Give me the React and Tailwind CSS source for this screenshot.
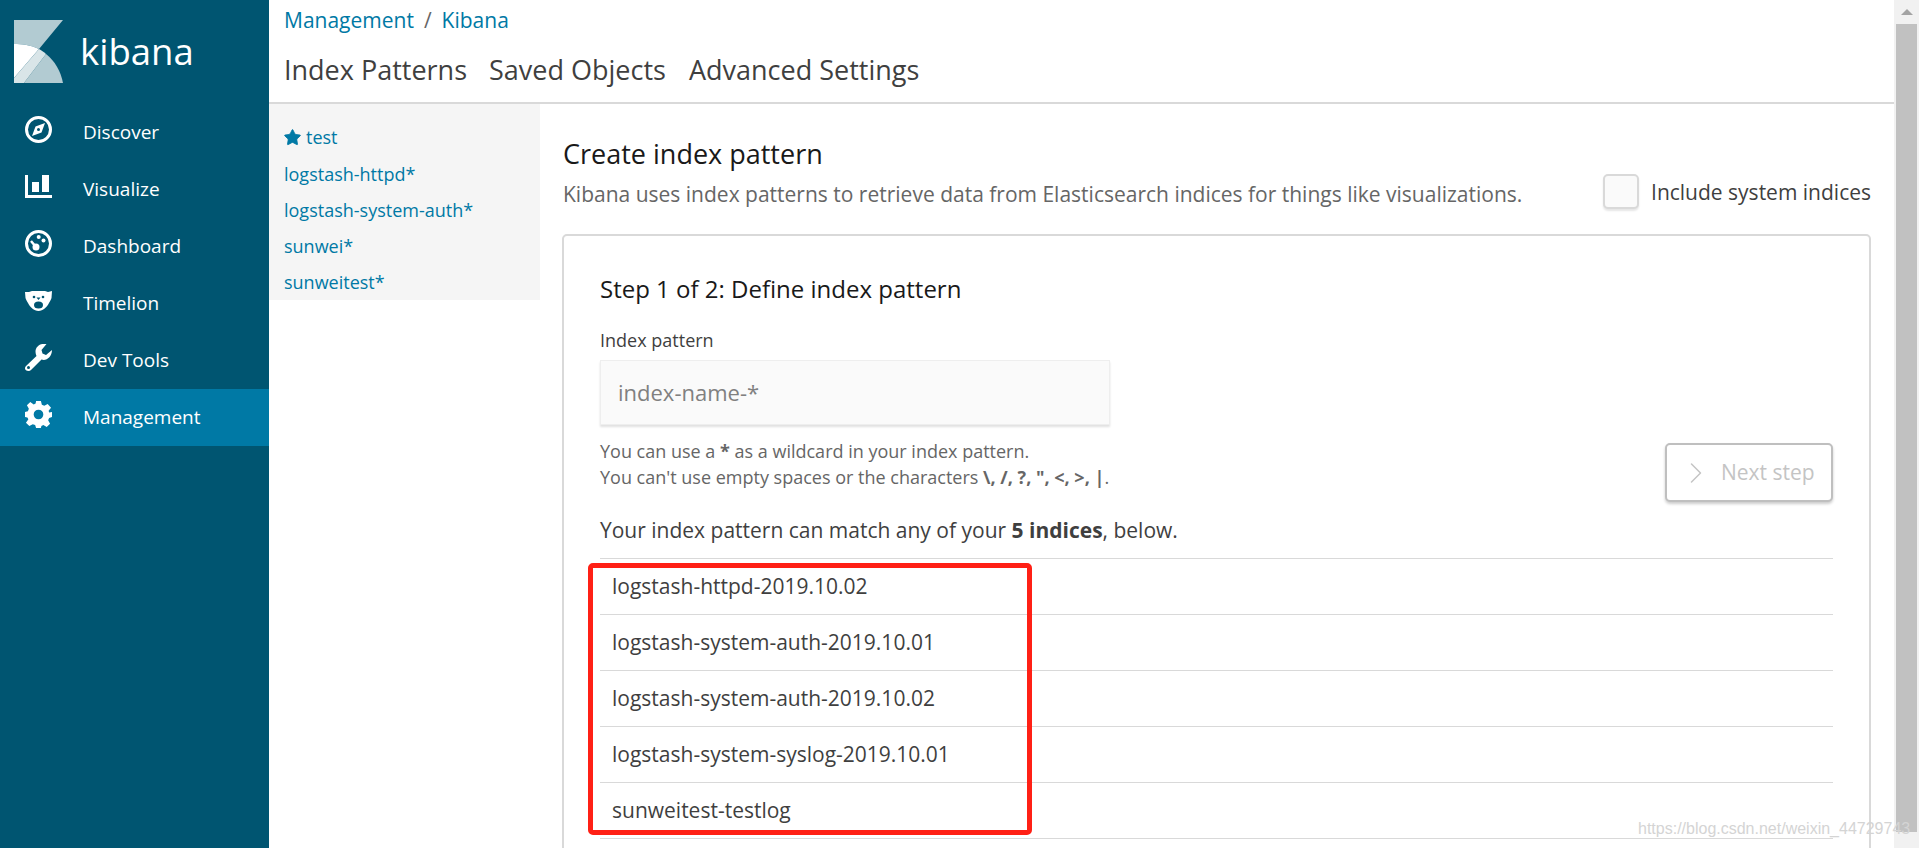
import React from "react";
import { Star, ChevronRight } from "lucide-react";

const navItems = [
  { label: "Discover", icon: <CompassIcon /> },
  { label: "Visualize", icon: <BarsIcon /> },
  { label: "Dashboard", icon: <GaugeIcon /> },
  { label: "Timelion", icon: <BearIcon /> },
  { label: "Dev Tools", icon: <WrenchIcon /> },
  { label: "Management", icon: <GearIcon />, active: true },
];

const patterns = ["logstash-httpd*", "logstash-system-auth*", "sunwei*", "sunweitest*"];

const indices = [
  "logstash-httpd-2019.10.02",
  "logstash-system-auth-2019.10.01",
  "logstash-system-auth-2019.10.02",
  "logstash-system-syslog-2019.10.01",
  "sunweitest-testlog",
];

function KibanaLogo() {
  return (
    <svg width="49" height="63" viewBox="0 0 49 63">
      <path d="M0 0H49L25 29C17 25 8 24 0 24Z" fill="#b2cbd2" />
      <path d="M32 34C41 41 47 52 49 63H10Z" fill="#b2cbd2" />
      <path d="M0 24C8 24 17 25 25 29L0 58Z" fill="#ffffff" />
      <path d="M25 29C27 30 30 32 32 34L10 63H0V58Z" fill="#d9e5e8" />
    </svg>
  );
}

function CompassIcon() {
  return (
    <svg width="27" height="27" viewBox="0 0 27 27">
      <circle cx="13.5" cy="13.5" r="12" fill="none" stroke="#fff" strokeWidth="3" />
      <path
        fillRule="evenodd"
        fill="#fff"
        d="M20 7 16.500 16.500 7 20 10.500 10.500ZM13.500 12A1.500 1.500 0 1 0 13.500 15 1.500 1.500 0 1 0 13.500 12Z"
      />
    </svg>
  );
}

function BarsIcon() {
  return (
    <svg width="27" height="23" viewBox="0 0 27 23">
      <path d="M0 0H3V20H27V23H0Z" fill="#fff" />
      <path d="M7 7H14V17H7ZM17 0H24V17H17Z" fill="#fff" />
    </svg>
  );
}

function GaugeIcon() {
  return (
    <svg width="27" height="27" viewBox="0 0 27 27">
      <circle cx="13.5" cy="13.5" r="12" fill="none" stroke="#fff" strokeWidth="3" />
      <circle cx="11" cy="17" r="3.500" fill="#fff" />
      <path d="M6 11 11 17" stroke="#fff" strokeWidth="2.500" />
      <circle cx="13.700" cy="7" r="2" fill="#fff" />
      <circle cx="18.500" cy="10.500" r="2" fill="#fff" />
    </svg>
  );
}

function BearIcon() {
  return (
    <svg width="27" height="21" viewBox="0 0 27 21">
      <path d="M0 2 4 2 7 1H20L23 2 27 1 26.500 8C26 10 25 11 24 13 22 17 18 21 13.500 21 9 21 5 17 3 13 2 11 1 10 .5 8Z" fill="#fff" />
      <circle cx="9" cy="7" r="1.300" fill="#005571" />
      <circle cx="18" cy="7" r="1.300" fill="#005571" />
      <path d="M11.500 7.500H15.500L13.500 10Z" fill="#005571" />
      <ellipse cx="13.500" cy="15" rx="4.500" ry="3.500" fill="#005571" />
    </svg>
  );
}

function WrenchIcon() {
  return (
    <svg width="27" height="27" viewBox="0 0 27 27">
      <path d="M27 6 21 11 17.500 9.500 16.500 6 21.500 0C16-1 11 2 10.500 7 10.500 9 11 11 11.500 12L1 22C-1 24 0 27 3.500 27 4.500 27 5.500 26.500 6.500 25.500L16.500 15.500C21 17.500 27 13 27 6Z" fill="#fff" />
      <circle cx="3.500" cy="23.500" r="1.500" fill="#005571" />
    </svg>
  );
}

function GearIcon() {
  return (
    <svg width="27" height="27" viewBox="0 0 28 28">
      <path
        fillRule="evenodd"
        fill="#fff"
        d="M11.500 0H16.500L17.500 4 20 5 23.500 3 27 7 24.500 10 25 12 28 11.500V16.500L25 17.500 24 20 26 23.500 22.500 27 19 25 17 26 16.500 28H11.500L10.500 25 8 24 4.500 26 1 22.500 3.500 19 2.500 17 0 16.500V11.500L3 10.500 4 8 2 4.500 5.500 1 9 3.500 11 2.500ZM14 9A5 5 0 1 0 14 19 5 5 0 1 0 14 9Z"
      />
    </svg>
  );
}

export default function App() {
  return (
    <div className="relative flex h-screen overflow-hidden bg-white font-['Open_Sans',sans-serif]">
      <aside className="w-[269px] shrink-0 bg-[#005571] text-white">
        <div className="flex h-[104px] items-start pl-[14px] pt-[20px]">
          <KibanaLogo />
          <span className="ml-[17px] mt-[9px] text-[36.5px] leading-[44px] font-medium">kibana</span>
        </div>
        <nav>
          {navItems.map((item) => (
            <div
              key={item.label}
              className={`flex h-[57px] items-center pl-[25px] text-[19px] ${item.active ? "bg-[#0079a5]" : ""}`}
            >
              <span className="-mt-[6px] flex w-[27px] justify-center">{item.icon}</span>
              <span className="ml-[31px]">{item.label}</span>
            </div>
          ))}
        </nav>
      </aside>

      <main className="min-w-0 flex-1">
        <header className="h-[104px] border-b-2 border-[#d9d9d9] pl-[15px]">
          <div className="flex gap-[10px] pt-[6px] text-[21px] leading-[28px] text-[#0079a5]">
            <span>Management</span>
            <span className="text-[#666666]">/</span>
            <span>Kibana</span>
          </div>
          <div className="mt-[18px] flex gap-[23px] text-[27px] leading-[36px] text-[#3f3f3f]">
            <span className="-mr-[1px]">Index Patterns</span>
            <span>Saved Objects</span>
            <span>Advanced Settings</span>
          </div>
        </header>

        <div className="flex">
          <div className="h-[196px] w-[271px] shrink-0 bg-[#f5f5f5] pl-[15px] pt-[16px] text-[18px] leading-[36px] text-[#0079a5]">
            <div className="-ml-[1px] -mt-[1px] mb-[1px] flex items-center gap-[4px]">
              <Star size={19} fill="#0079a5" strokeWidth={1} />
              test
            </div>
            {patterns.map((p) => (
              <div key={p}>{p}</div>
            ))}
          </div>

          <div className="min-w-0 flex-1 pl-[23px] pr-[23px]">
            <div className="flex h-[130px] items-start justify-between pt-[32px]">
              <div>
                <h1 className="text-[27px] leading-[36px] text-[#191919]">Create index pattern</h1>
                <p className="mt-[6px] text-[21px] leading-[32px] text-[#666666]">
                  Kibana uses index patterns to retrieve data from Elasticsearch indices for things like visualizations.
                </p>
              </div>
              <label className="mt-[38px] flex items-center gap-[12px] text-[21px] text-[#3f3f3f]">
                <span className="h-[35px] w-[36px] rounded-[5px] border-2 border-[#d9d9d9] bg-[#fafafa] shadow-[0_2px_2px_rgba(0,0,0,0.1)]" />
                <span className="mt-[2px]">Include system indices</span>
              </label>
            </div>

            <section className="-ml-[1px] rounded-t-[5px] border-2 border-[#d9d9d9] px-[36px] pb-[24px] pt-[35px]">
              <h2 className="text-[24px] leading-[36px] text-[#191919]">Step 1 of 2: Define index pattern</h2>
              <div className="flex items-start justify-between">
                <div>
                  <div className="mt-[20px] text-[18px] leading-[26px] text-[#3f3f3f]">Index pattern</div>
                  <div className="mt-[7px] flex h-[65px] w-[510px] items-center border border-[#eeeeee] bg-[#fafafa] pl-[17px] text-[22px] text-[#808080] shadow-[0_2px_2px_rgba(0,0,0,0.12)]">
                    index-name-*
                  </div>
                  <p className="mt-[13px] text-[18px] leading-[26px] text-[#666666]">
                    You can use a <b>*</b> as a wildcard in your index pattern.
                    <br />
                    You can't use empty spaces or the characters <b>\, /, ?, ", &lt;, &gt;, |</b>.
                  </p>
                </div>
                <button className="mt-[136px] flex h-[59px] w-[168px] items-center gap-[7px] rounded-[5px] border-2 border-[#bfbfbf] bg-white pl-[11px] text-[21px] text-[#c4c4c4] shadow-[0_2px_3px_rgba(0,0,0,0.2)]">
                  <ChevronRight size={36} strokeWidth={1} />
                  Next step
                </button>
              </div>
              <p className="mt-[13px] text-[21px] leading-[30px] text-[#3f3f3f]">
                Your index pattern can match any of your <b>5 indices</b>, below.
              </p>
              <ul className="mt-[13px] border-t border-[#d9d9d9]">
                {indices.map((name) => (
                  <li key={name} className="flex h-[56px] items-center border-b border-[#d9d9d9] pl-[12px] text-[21px] text-[#3f3f3f]">
                    {name}
                  </li>
                ))}
              </ul>
            </section>
          </div>
        </div>
      </main>

      <div className="flex w-[25px] shrink-0 flex-col items-center bg-[#f1f1f1]">
        <div className="flex h-[24px] w-full items-center justify-center">
          <span className="h-0 w-0 border-x-[6px] border-b-[6px] border-x-transparent border-b-[#a3a3a3]" />
        </div>
        <div className="h-[808px] w-[21px] bg-[#c1c1c1]" />
      </div>

      {/* red annotation drawn over the screenshot */}
      <div className="absolute left-[588px] top-[563px] h-[272px] w-[444px] rounded-[5px] border-[5px] border-[#ff2015]" />
      <div className="absolute left-[1638px] top-[817px] font-['Liberation_Sans',sans-serif] text-[16px] leading-[24px] text-[#d4d4d4]">
        https://blog.csdn.net/weixin_44729743
      </div>
    </div>
  );
}
